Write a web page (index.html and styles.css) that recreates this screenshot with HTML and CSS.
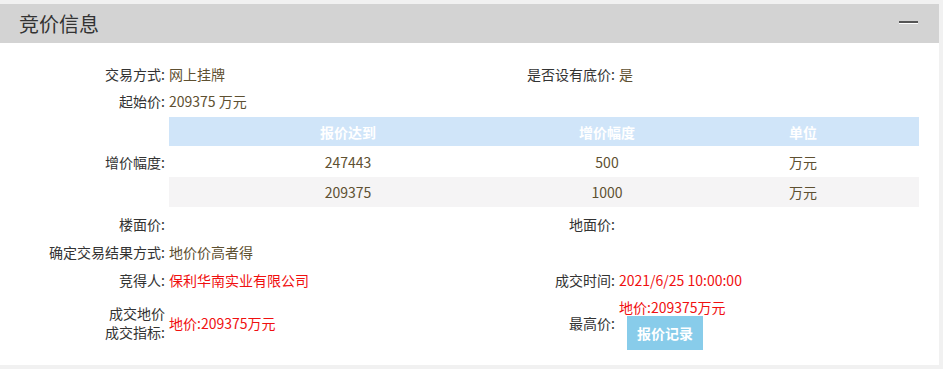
FILE: index.html
```html
<!DOCTYPE html>
<html lang="zh-CN">
<head>
  <meta charset="UTF-8">
  <title>竞价信息</title>
  <link rel="stylesheet" href="styles.css">
</head>
<body>
  <div class="panel">
    <div class="panel-head">
      <span class="panel-title">竞价信息</span>
      <span class="collapse"></span>
    </div>
    <div class="info">
      <div class="label">交易方式:</div>
      <div class="value">网上挂牌</div>
      <div class="label">是否设有底价:</div>
      <div class="value">是</div>

      <div class="label">起始价:</div>
      <div class="value wide">209375 万元</div>

      <div class="label">增价幅度:</div>
      <div class="wide table-cell">
        <table class="steps">
          <thead>
            <tr><th class="c1">报价达到</th><th class="c2">增价幅度</th><th>单位</th></tr>
          </thead>
          <tbody>
            <tr><td>247443</td><td>500</td><td>万元</td></tr>
            <tr class="alt"><td>209375</td><td>1000</td><td>万元</td></tr>
          </tbody>
        </table>
      </div>

      <div class="label">楼面价:</div>
      <div class="value"></div>
      <div class="label">地面价:</div>
      <div class="value"></div>

      <div class="label">确定交易结果方式:</div>
      <div class="value wide">地价价高者得</div>

      <div class="label">竞得人:</div>
      <div class="value red">保利华南实业有限公司</div>
      <div class="label">成交时间:</div>
      <div class="value red">2021/6/25 10:00:00</div>

      <div class="label two-line">
        <span>成交地价</span>
        <span>成交指标:</span>
      </div>
      <div class="value red">地价:209375万元</div>
      <div class="label">最高价:</div>
      <div class="value stack">
        <div class="red">地价:209375万元</div>
        <button class="btn">报价记录</button>
      </div>
    </div>
  </div>
</body>
</html>
```

FILE: styles.css
```css
body {
  margin: 0;
  background: #f1f1f1;
  font-family: "Noto Sans CJK SC", "Liberation Sans", sans-serif;
  font-size: 14px;
  color: #333;
}

.panel {
  width: 939px;
  margin-top: 4px;
  background: #fff;
}

.panel-head {
  height: 39px;
  background: #d3d3d3;
  display: flex;
  align-items: center;
  justify-content: space-between;
  padding: 0 21px 0 19px;
}

.panel-title {
  font-size: 20px;
  line-height: 39px;
  color: #333;
}

.collapse {
  width: 19px;
  height: 2px;
  background: #555;
  border-bottom: 1px solid #fff;
  margin-top: -2px;
}

.info {
  display: grid;
  grid-template-columns: 165px 355px 95px 1fr;
  grid-template-rows: 27px 27px 96px 28px 28px 28px 58px;
  padding: 17px 0 13px;
}

.label,
.value {
  display: flex;
  align-items: center;
  line-height: 18px;
}

.label {
  justify-content: flex-end;
  text-align: right;
  color: #333;
}

.label.two-line {
  flex-direction: column;
  align-items: flex-end;
  justify-content: center;
  gap: 1px;
  padding-bottom: 1px;
}

.value {
  padding-left: 4px;
  color: #5e5031;
}

.wide {
  grid-column: 2 / -1;
}

.red,
.value.red {
  color: #f01010;
}

.table-cell {
  padding: 3px 20px 0 4px;
}

.steps {
  width: 100%;
  border-collapse: collapse;
  text-align: center;
}

.steps th {
  height: 29px;
  padding: 0;
  background: #d0e5f9;
  color: #fff;
  font-weight: bold;
}

.steps td {
  height: 30px;
  padding: 0;
  color: #5e5031;
}

.steps tbody tr:first-child td {
  height: 31px;
}

.steps .c1 {
  width: 358px;
}

.steps .c2 {
  width: 160px;
}

.steps .alt td {
  background: #f5f4f5;
}

.value.stack {
  flex-direction: column;
  align-items: flex-start;
  justify-content: center;
  padding-top: 2px;
}

.btn {
  margin: 0 0 0 8px;
  width: 76px;
  height: 34px;
  border: none;
  background: #88ccea;
  color: #fff;
  font-family: inherit;
  font-size: 14px;
  font-weight: bold;
  padding: 0;
}
```
